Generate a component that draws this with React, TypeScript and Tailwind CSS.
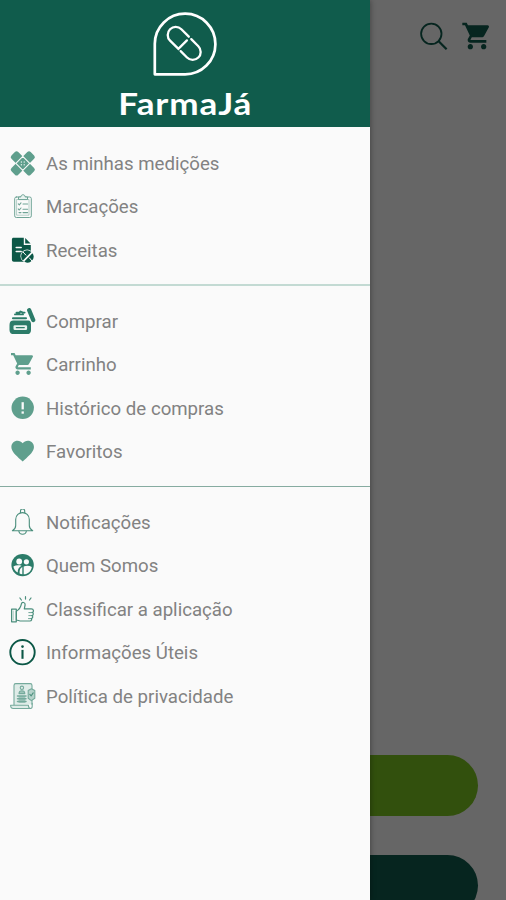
import React from "react";

interface MenuItem {
  label: string;
  icon: React.ReactNode;
}

const Icon = ({ children }: { children: React.ReactNode }) => (
  <svg
    viewBox="0 0 28 28"
    className="h-7 w-7 shrink-0"
    fill="none"
    strokeLinecap="round"
    strokeLinejoin="round"
  >
    {children}
  </svg>
);

const CART_PATH =
  "M7 18c-1.1 0-1.99.9-1.99 2S5.9 22 7 22s2-.9 2-2-.9-2-2-2zM1 2v2h2l3.6 7.59-1.35 2.45c-.16.28-.25.61-.25.96 0 1.1.9 2 2 2h12v-2H7.42c-.14 0-.25-.11-.25-.25l.03-.12.9-1.63h7.45c.75 0 1.41-.41 1.75-1.03l3.58-6.49A1.003 1.003 0 0 0 20 4H5.21l-.94-2H1zm16 16c-1.1 0-1.99.9-1.99 2s.89 2 1.99 2 2-.9 2-2-.9-2-2-2z";

const BandageIcon = () => (
  <Icon>
    <g transform="translate(14.8 13.4)">
      <rect x="-13.6" y="-4.8" width="27.2" height="9.6" rx="2.4" fill="#5f9f8d" transform="rotate(-45)" />
      <rect x="-13.6" y="-4.8" width="27.2" height="9.6" rx="2.4" fill="#5f9f8d" transform="rotate(45)" />
      <g transform="rotate(45)">
        <path d="M-4.9-4.9v9.8M4.9-4.9v9.8M-4.9-4.9h9.8M-4.9 4.9h9.8" stroke="#fafafa" strokeWidth="1.1" />
        <g fill="#e4f0ec">
          <circle cx="0" cy="-2" r=".7" />
          <circle cx="0" cy="2" r=".7" />
          <circle cx="-2" cy="0" r=".7" />
          <circle cx="2" cy="0" r=".7" />
        </g>
      </g>
    </g>
  </Icon>
);

const ClipboardIcon = () => (
  <Icon>
    <g stroke="#6fa496" strokeWidth="1">
      <rect x="6.7" y="4" width="16.6" height="20.5" rx="1.6" />
      <path d="M9 6.5h12v15.7H9z" strokeWidth=".5" />
      <path d="M10.5 6.2V4h2.3c0-3 4.4-3 4.4 0h2.3v2.2z" fill="#e9f3f0" />
      <path d="M10.3 10.8l1 1 1.7-2M10.3 16l1 1 1.7-2M15 11h4.6M15 16.2h4.6M11 19.6h2M15 19.6h4.6" strokeWidth="1.1" />
    </g>
  </Icon>
);

const RecipeIcon = () => (
  <Icon>
    <path d="M5.5 .8h10.3V8h7v14.8c0 1.1-.8 2-1.9 2H5.8c-1.1 0-1.9-.9-1.9-2V2.4c0-.9.7-1.6 1.6-1.6z" fill="#0b5746" />
    <path d="M17.2 1.1l5.4 5.5h-5.4z" fill="#0b5746" />
    <path d="M8.2 10.4h5M8.2 14.4h5" stroke="#fafafa" strokeWidth="1.5" />
    <circle cx="19.1" cy="19.2" r="6.6" fill="#fafafa" />
    <path d="M14.9 23.4a5.8 5.8 0 0 1 8.4-8.4zM16.3 24.4l8.1-8.1a5.8 5.8 0 0 1-8.1 8.1z" fill="#0b5746" />
    <path d="M15.3 15.3l2.6 2.8M21.5 21l2.6 3.2" stroke="#fafafa" strokeWidth="1" />
  </Icon>
);

const JarIcon = () => (
  <Icon>
    <g stroke="#2c7c69">
      <path d="M5.5 13.2h14.8c1.4 0 2 1.3 2 3.2v5.5c0 2.3-1.2 3.5-3.5 3.5H6c-2.4 0-3.8-1.2-3.8-3.5v-5c0-2.3 1-3.7 3.3-3.7z" fill="#2c7c69" strokeWidth="1.4" />
      <rect x="5.5" y="17.2" width="13.6" height="4.8" rx="1.3" fill="#e8f3ef" stroke="none" />
      <path d="M8.3 19.6h8" strokeWidth="1.2" />
      <path d="M5 10.3h13" strokeWidth="2.1" />
      <path d="M7 6.4h8M8.5 4.6h3l1-1.1 2.5 1.1h1.6" strokeWidth="1.9" />
      <path d="M21.2 2.2l4 9.8" strokeWidth="4.3" />
    </g>
  </Icon>
);

const CartIcon = () => (
  <Icon>
    <path d={CART_PATH} fill="#5f9f8d" transform="translate(1.9 -.2) scale(1.1)" />
  </Icon>
);

const HistoryIcon = () => (
  <Icon>
    <circle cx="14.7" cy="12.8" r="11.2" fill="#5f9f8d" />
    <path d="M14.7 7.2v7.2" stroke="#fafafa" strokeWidth="2.3" strokeLinecap="butt" />
    <path d="M14.7 16.4v2.3" stroke="#fafafa" strokeWidth="2.3" strokeLinecap="butt" />
  </Icon>
);

const HeartIcon = () => (
  <Icon>
    <path
      d="M12 21.35l-1.45-1.32C5.4 15.36 2 12.28 2 8.5 2 5.42 4.42 3 7.5 3c1.74 0 3.41.81 4.5 2.09C13.09 3.81 14.76 3 16.5 3 19.58 3 22 5.42 22 8.5c0 3.78-3.4 6.86-8.55 11.54L12 21.35z"
      fill="#5f9f8d"
      transform="translate(1.1 -.6) scale(1.13)"
    />
  </Icon>
);

const BellIcon = () => (
  <Icon>
    <g stroke="#4a8e7c" strokeWidth="1.1">
      <path d="M12.5 3.6V2c0-2.6 4.2-2.6 4.2 0v1.6" />
      <path d="M4.4 21.8c2.4-1.4 3.3-2.8 3.3-5.2v-6.2c0-9 13.6-9 13.6 0v6.2c0 2.4 1 3.8 3.4 5.2z" />
      <path d="M10.9 22.3c.5 4 6.9 4 7.4 0" />
    </g>
  </Icon>
);

const PeopleIcon = () => (
  <Icon>
    <circle cx="14.6" cy="13.1" r="11.2" fill="#2c7c69" />
    <g fill="#fafafa">
      <circle cx="11.2" cy="9.5" r="2.9" />
      <circle cx="18.4" cy="9.8" r="2.6" />
      <path d="M5.4 14.4c2.2-1.2 5.4-1.4 8.2-.6-2.8 1.4-4 3.8-3.8 6.6-2.5-1.2-4-3.4-4.4-6z" />
      <path d="M11.6 21.4c-.3-3.5.6-5.2 2.7-6.3v7.1c-1-.1-1.9-.4-2.7-.8z" />
      <path d="M15.7 14.4c2.8-1 6-.8 8.1.5-.7 4.2-3.9 7.2-8.1 7.4z" />
    </g>
  </Icon>
);

const ThumbIcon = () => (
  <Icon>
    <g stroke="#4a8e7c" strokeWidth="1.2">
      <path d="M3.6 13.2h4.7v12.6H3.6z" />
      <path d="M8.3 15.2c3.4-1.8 4.5-4 5.1-7.3.5-2.3 4-1.7 3.7.9l-.8 4.1h7c2.6 0 2.9 3.2.8 3.5 1.7.4 1.6 3-.2 3.2 1.3.5 1.1 2.8-.6 3 .8.7.4 2.4-1.4 2.4h-8.5c-2 0-3.3-.8-5.1-1z" />
      <path d="M20.8 16.6h3M20.8 19.6h3M20.5 22.6h2.6" strokeWidth=".8" />
      <path d="M17.5.7v2.4M11.9 2l1.5 2M23 2l-1.5 2" />
    </g>
    <path d="M5.2 15v9" stroke="#a9cbc1" strokeWidth="1" />
  </Icon>
);

const InfoIcon = () => (
  <Icon>
    <circle cx="14.5" cy="13.2" r="12.2" stroke="#0b5746" strokeWidth="1.9" />
    <path d="M14.5 10.9v8.9" stroke="#0b5746" strokeWidth="2.1" strokeLinecap="butt" />
    <circle cx="14.5" cy="7.6" r="1.3" fill="#0b5746" />
  </Icon>
);

const PolicyIcon = () => (
  <Icon>
    <g stroke="#75aa9c" strokeWidth="1.1">
      <path d="M6 22.3V2.4C6 1 6.8.6 7.8.6h14.4c1.2 0 1.8.8 1.8 1.8v18.8" fill="#dfece8" />
      <path d="M2.6 22.3h17.8c0 2.3.8 3.2 2.2 3.2H5.2c-1.8 0-2.6-1.2-2.6-3.2z" fill="#dfece8" />
      <path d="M22.6 25.5c1.1 0 1.6-.8 1.6-2.2v-3" />
      <circle cx="13.9" cy="4.8" r="1.7" />
      <path d="M11 10.6c0-3.8 5.8-3.8 5.8 0z" fill="#9cc3b8" />
      <path d="M9.5 13h8.5M9.5 15.8h8.5M9.5 18.6h8.5" strokeWidth="1.5" />
      <path d="M20.2 7.6l3.2-1.8 3.4 1.8v7.6l-3.4 2.4-3.2-2.4z" fill="#b5d2ca" />
      <path d="M21.8 11.4l1.4 1.4 2-2.9" stroke="#4a8e7c" />
    </g>
    <path d="M10.5 13h6.8v7h-6.8z" fill="#75aa9c" fillOpacity=".6" />
  </Icon>
);

const menuGroups: MenuItem[][] = [
  [
    { label: "As minhas medições", icon: <BandageIcon /> },
    { label: "Marcações", icon: <ClipboardIcon /> },
    { label: "Receitas", icon: <RecipeIcon /> },
  ],
  [
    { label: "Comprar", icon: <JarIcon /> },
    { label: "Carrinho", icon: <CartIcon /> },
    { label: "Histórico de compras", icon: <HistoryIcon /> },
    { label: "Favoritos", icon: <HeartIcon /> },
  ],
  [
    { label: "Notificações", icon: <BellIcon /> },
    { label: "Quem Somos", icon: <PeopleIcon /> },
    { label: "Classificar a aplicação", icon: <ThumbIcon /> },
    { label: "Informações Úteis", icon: <InfoIcon /> },
    { label: "Política de privacidade", icon: <PolicyIcon /> },
  ],
];

const DrawerHeader = () => (
  <header className="flex h-[127px] shrink-0 flex-col items-center bg-[#105c4c] pt-[11px] text-white">
    <svg viewBox="0 0 66 66" className="h-[66px] w-[66px]" fill="none" stroke="currentColor">
      <path d="M2.8 63.3V32.8A30.3 30.3 0 1 1 33 63.3z" strokeWidth="2.7" strokeLinejoin="round" />
      <g transform="translate(32.2 32.4) rotate(45)" strokeWidth="2.3" strokeLinecap="round">
        <path d="M-1.5-8H-12a8 8 0 0 0 0 16H-.2V-4" />
        <path d="M2-8h10a8 8 0 0 1 0 16H3" />
      </g>
    </svg>
    <h1 className="mt-[7px] scale-x-[1.13] font-['Lato'] text-[31px] leading-[38px] font-bold tracking-[0.8px]">
      FarmaJá
    </h1>
  </header>
);

const Drawer = () => (
  <aside className="z-10 flex w-[370px] shrink-0 flex-col bg-[#fafafa] shadow-[1px_0_5px_rgba(0,0,0,0.3)]">
    <DrawerHeader />
    <nav>
      {menuGroups.map((group, index) => (
        <ul
          key={index}
          className="border-b border-[#86aba0] pt-[14px] pb-3 first:border-b-2 first:border-[#c3dad3] first:pt-[15px] first:pb-[11.5px] last:border-b-0"
        >
          {group.map((item) => (
            <li key={item.label} className="flex h-[43.5px] items-center gap-[10px] pl-2">
              {item.icon}
              <span className="text-[18.65px] leading-6 whitespace-nowrap text-[#828282]">
                {item.label}
              </span>
            </li>
          ))}
        </ul>
      ))}
    </nav>
  </aside>
);

const Backdrop = () => (
  <main className="flex flex-1 flex-col justify-between bg-[#666666]">
    <div className="flex justify-end gap-3 pt-[19.5px] pr-[13px] text-[#06251f]">
      <svg viewBox="0 0 32 32" className="h-8 w-8" fill="none" stroke="currentColor">
        <circle cx="14.3" cy="13.8" r="10.2" strokeWidth="1.8" />
        <path d="M21.4 21l8.2 8.2" strokeWidth="2.2" />
      </svg>
      <svg viewBox="0 0 24 24" className="h-8 w-8" fill="currentColor">
        <path d={CART_PATH} />
      </svg>
    </div>
    <div className="flex h-[145px] flex-col gap-[39px] overflow-hidden pr-7">
      <div className="h-[61px] shrink-0 rounded-r-full bg-[#32500d]" />
      <div className="h-[61px] shrink-0 rounded-r-full bg-[#06251f]" />
    </div>
  </main>
);

const App: React.FC = () => {
  return (
    <div className="flex h-[900px] w-[506px] overflow-hidden font-['Roboto',sans-serif]">
      <Drawer />
      <Backdrop />
    </div>
  );
};

export default App;
